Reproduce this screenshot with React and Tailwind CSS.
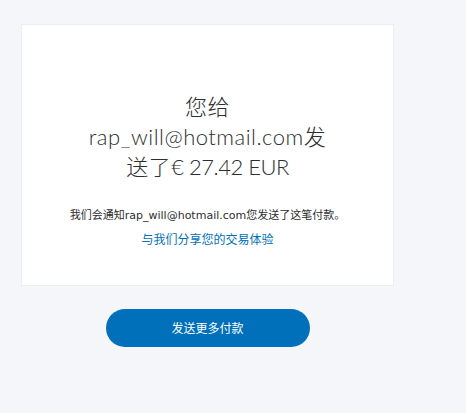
import React from 'react';

const App = () => {
  return (
    <div className="min-h-[413px] w-full bg-[#f5f6fa] pt-[24px] pl-[21px]">
      <div className="w-[373px] h-[262px] bg-white border border-[#eceef2] flex flex-col items-center pt-[67px]">
        <h1 className="w-[248px] text-center text-[22px] leading-[30px] font-light tracking-[0.5px] text-[#2c2e2f] font-['Lato','Noto_Sans_CJK_SC',sans-serif]">
          您给 rap_will@hotmail.com发送了<span className="tracking-[-0.5px]">€ 27.42 EUR</span>
        </h1>
        <p className="mt-[26px] text-[11px] leading-[16px] text-[#2c2e2f] font-['DejaVu_Sans','Noto_Sans_CJK_SC',sans-serif]">
          我们会通知rap_will@hotmail.com您发送了这笔付款。
        </p>
        <a
          href="#"
          className="mt-[8px] text-[12px] leading-[16px] text-[#0070ba] font-['DejaVu_Sans','Noto_Sans_CJK_SC',sans-serif]"
        >
          与我们分享您的交易体验
        </a>
      </div>
      <div className="mt-[23px] w-[373px] flex justify-center">
        <button className="w-[204px] h-[38px] rounded-full bg-[#0070ba] text-white text-[12px] font-['Noto_Sans_CJK_SC',sans-serif]">
          发送更多付款
        </button>
      </div>
    </div>
  );
};

export default App;
